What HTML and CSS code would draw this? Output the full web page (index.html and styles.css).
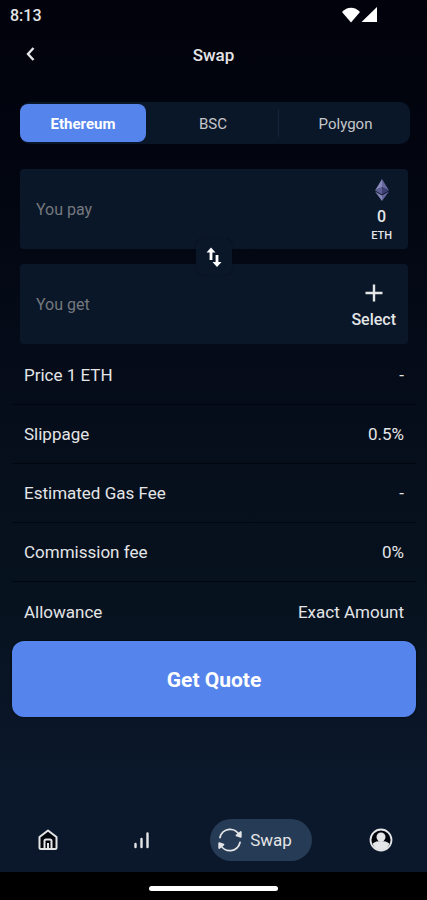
FILE: index.html
```html
<!DOCTYPE html>
<html lang="en">
<head>
<meta charset="utf-8">
<meta name="viewport" content="width=device-width, initial-scale=1">
<title>Swap</title>
<link rel="stylesheet" href="styles.css">
</head>
<body>
<div class="status">
  <span>8:13</span>
  <svg class="signal" width="36" height="18" viewBox="0 0 36 18" fill="#fff" aria-hidden="true">
    <path d="M0 5C5-.7 13-.7 18 5L9 15.500z"/>
    <path d="M35 0v15H19.500z"/>
  </svg>
</div>
<header class="header">
  <button class="back" type="button" aria-label="Back">
    <svg width="12" height="16" viewBox="0 0 12 16" fill="none" stroke="currentColor" stroke-width="2.400" aria-hidden="true"><path d="M9.500 1L4 7l5.500 6"/></svg>
  </button>
  <h1 class="title">Swap</h1>
</header>
<main class="content">
  <div class="networks">
    <button class="network active" type="button" aria-pressed="true">Ethereum</button>
    <button class="network" type="button" aria-pressed="false">BSC</button>
    <button class="network divided" type="button" aria-pressed="false">Polygon</button>
  </div>
  <div class="pair">
    <div class="card">
      <input class="amount" type="text" placeholder="You pay" aria-label="You pay">
      <button class="token eth" type="button">
        <svg width="16" height="24" viewBox="0 0 16 24" aria-hidden="true">
          <path fill="#8587b8" d="M8 0L1 11.500l7-3.300z"/>
          <path fill="#64669c" d="M8 0l7 11.500-7-3.300z"/>
          <path fill="#5c5e94" d="M8 8.200l-7 3.300 7 4z"/>
          <path fill="#3d3f72" d="M8 8.200l7 3.300-7 4z"/>
          <path fill="#8587b8" d="M1 12.500l7 4V22z"/>
          <path fill="#64669c" d="M15 12.500l-7 4V22z"/>
        </svg>
        <span class="balance">0</span>
        <span class="symbol">ETH</span>
      </button>
    </div>
    <div class="card">
      <input class="amount" type="text" placeholder="You get" aria-label="You get">
      <button class="token" type="button">
        <svg width="18" height="18" viewBox="0 0 18 18" stroke="currentColor" stroke-width="2.400" aria-hidden="true"><path d="M9 .5v17M.5 9h17"/></svg>
        <span>Select</span>
      </button>
    </div>
    <button class="flip" type="button" aria-label="Switch tokens">
      <svg width="16" height="20" viewBox="0 0 16 20" aria-hidden="true">
        <path fill="none" stroke="currentColor" stroke-width="2.800" d="M5 4v9M11 8v8"/>
        <path fill="currentColor" d="M5 .5l4.500 5H.5zM11 20l4.500-5h-9z"/>
      </svg>
    </button>
  </div>
  <dl class="details">
    <div class="row"><dt>Price 1 ETH</dt><dd>-</dd></div>
    <div class="row"><dt>Slippage</dt><dd>0.5%</dd></div>
    <div class="row"><dt>Estimated Gas Fee</dt><dd>-</dd></div>
    <div class="row"><dt>Commission fee</dt><dd>0%</dd></div>
    <div class="row"><dt>Allowance</dt><dd>Exact Amount</dd></div>
  </dl>
  <button class="quote" type="button">Get Quote</button>
</main>
<nav class="nav" aria-label="Main">
  <a href="#home" aria-label="Home">
    <svg width="22" height="22" viewBox="0 0 22 22" fill="none" stroke="currentColor" stroke-width="2" stroke-linejoin="round" aria-hidden="true"><path fill="#02050c" d="M2.500 8L11 1.500 19.500 8V18.500a1.500 1.500 0 0 1-1.500 1.500H4a1.500 1.500 0 0 1-1.500-1.500z"/><path d="M7.500 20V12a1.500 1.500 0 0 1 1.500-1.500h4a1.500 1.500 0 0 1 1.500 1.500V20M11 14v6"/></svg>
  </a>
  <a href="#markets" aria-label="Markets">
    <svg width="16" height="18" viewBox="0 0 16 18" fill="none" stroke="currentColor" stroke-width="2.400" stroke-linecap="round" aria-hidden="true"><path d="M2.500 13v3M8.500 8v8M14.500 2.500V16"/></svg>
  </a>
  <a class="current" href="#swap" aria-current="page">
    <svg width="24" height="24" viewBox="0 0 24 24" fill="none" stroke="currentColor" stroke-width="1.800" stroke-linecap="round" aria-hidden="true"><path d="M2 9.500A10.300 10.300 0 0 1 21.500 7.500M22 14.500A10.300 10.300 0 0 1 2.500 16.500"/><path fill="currentColor" stroke-linejoin="round" d="M22.800 4v4.800L18.500 7.500zM1.200 20v-4.800l4.300 1.300z"/></svg>
    <span>Swap</span>
  </a>
  <a href="#account" aria-label="Account">
    <svg width="24" height="24" viewBox="0 0 24 24" aria-hidden="true"><circle cx="12" cy="12" r="10.500" fill="#02050c" stroke="currentColor" stroke-width="1.800"/><circle cx="12" cy="9" r="4.500" fill="currentColor"/><path fill="currentColor" d="M3.500 15.500C6 13.800 8.500 13 12 13s6 .8 8.500 2.500C19 20 16 22 12 22s-7-2-8.500-6.500z"/></svg>
  </a>
</nav>
<div class="gesture"><span class="handle"></span></div>
</body>
</html>
```
FILE: styles.css
```css
* {
  box-sizing: border-box;
}

body {
  margin: 0;
  min-height: 100vh;
  display: flex;
  flex-direction: column;
  font: 400 17px/20px Roboto, sans-serif;
  color: #e4e5e7;
  background: linear-gradient(#01020b 0, #020611 200px, #060d1a 400px, #07121f 600px, #0b182b 780px);
}

button,
input {
  margin: 0;
  padding: 0;
  border: 0;
  background: none;
  color: inherit;
  font: inherit;
}

svg {
  display: block;
  flex: none;
}

.status {
  display: flex;
  align-items: center;
  justify-content: space-between;
  height: 32px;
  padding: 0 49px 0 10px;
  font-size: 16px;
  font-weight: 500;
}

.header {
  display: grid;
  grid-template-columns: 1fr auto 1fr;
  align-items: center;
  height: 46px;
  padding: 0 24px;
}

.back {
  justify-self: start;
}

.title {
  margin: 0;
  font-size: 17px;
  font-weight: 500;
}

.content {
  display: flex;
  flex-direction: column;
  padding: 24px 11px 0 12px;
}

.networks {
  display: grid;
  grid-template-columns: 126px 1fr 1fr;
  align-items: center;
  height: 42px;
  margin: 0 6px 0 8px;
  border-radius: 10px;
  background: #0a1729;
  font-size: 15px;
}

.network {
  height: 28px;
  padding: 2px 0 0 2px;
  color: #c6c7ca;
}

.network.active {
  height: 38px;
  padding-left: 0;
  border-radius: 8px;
  background: #5584ec;
  color: #fff;
  font-weight: 700;
}

.network.divided {
  border-left: 1px solid #15243a;
}

.pair {
  position: relative;
  display: grid;
  gap: 15px;
  margin: 25px 8px 0;
  font-size: 16px;
}

.card {
  display: flex;
  align-items: center;
  height: 80px;
  padding: 2px 12px 0 16px;
  border-radius: 4px;
  background: #0a1729;
}

.amount {
  flex: 1;
  min-width: 0;
  outline: none;
}

.amount::placeholder {
  color: #75787d;
  opacity: 1;
}

.token {
  display: flex;
  flex-direction: column;
  align-items: center;
  gap: 8px;
  padding-top: 4px;
  font-weight: 500;
}

.token.eth {
  gap: 2px;
  padding: 2px 4px 0 0;
}

.token.eth svg {
  margin-bottom: 2px;
}

.symbol {
  font-size: 11px;
  line-height: 14px;
}

.flip {
  position: absolute;
  top: 50%;
  left: 50%;
  display: grid;
  place-items: center;
  width: 36px;
  height: 36px;
  transform: translate(-50%, -50%);
  border-radius: 6px;
  background: #0a1729;
  box-shadow: 0 0 1px #020611;
  color: #fff;
}

.details {
  margin: 2px 0 0;
}

.row {
  display: flex;
  align-items: center;
  justify-content: space-between;
  height: 59px;
  padding: 0 12px;
  border-bottom: 1px solid #02060f;
}

.row:last-child {
  border-bottom: 0;
}

.row dd {
  margin: 0;
}

.quote {
  height: 76px;
  padding-top: 2px;
  border-radius: 12px;
  background: #5584ec;
  box-shadow: 0 0 2px #000;
  color: #fff;
  font-size: 21px;
  font-weight: 700;
}

.nav {
  display: flex;
  align-items: center;
  justify-content: space-between;
  height: 64px;
  margin-top: auto;
  padding: 0 22px 0 24px;
}

.nav a {
  display: flex;
  align-items: center;
  justify-content: center;
  width: 48px;
  color: inherit;
  text-decoration: none;
}

.nav .current {
  gap: 8px;
  width: auto;
  height: 42px;
  padding: 0 20px 0 8px;
  border-radius: 21px;
  background: #263b55;
}

.gesture {
  display: grid;
  place-items: center;
  height: 28px;
  padding-top: 5px;
  background: #000;
}

.handle {
  width: 30%;
  height: 5px;
  border-radius: 3px;
  background: #fff;
}
```
